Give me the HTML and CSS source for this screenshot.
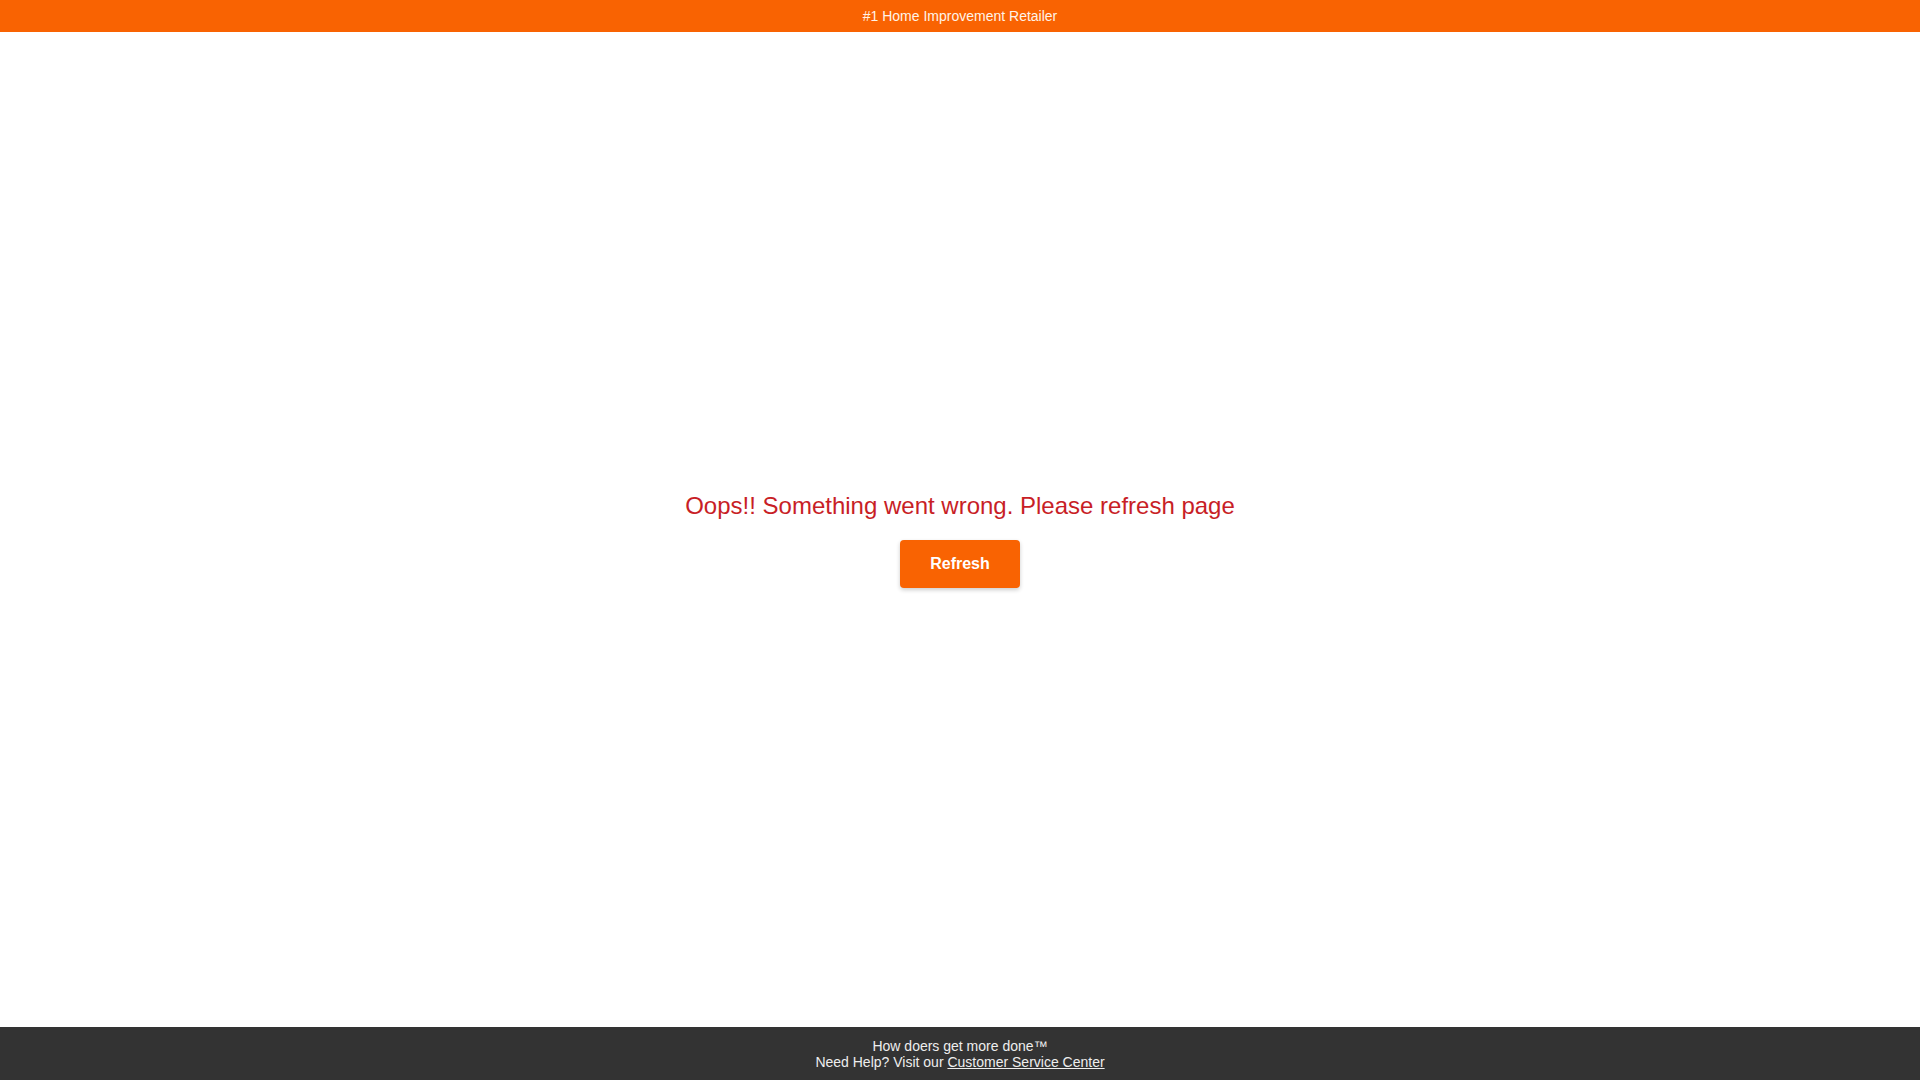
FILE: index.html
```html
<!DOCTYPE html>
<html lang="en">
<head>
<meta charset="utf-8">
<title>The Home Depot</title>
<link rel="stylesheet" href="styles.css">
</head>
<body>
<div class="page">
  <header class="topbar">#1 Home Improvement Retailer</header>
  <main class="content">
    <div class="error-box">
      <p class="error-text">Oops!! Something went wrong. Please refresh page</p>
      <button class="refresh-btn" type="button">Refresh</button>
    </div>
  </main>
  <footer class="footer">
    <div class="footer-line">How doers get more done™</div>
    <div class="footer-line">Need Help? Visit our <a class="footer-link" href="#">Customer Service Center</a></div>
  </footer>
</div>
</body>
</html>
```
FILE: styles.css
```css
html, body {
  margin: 0;
  padding: 0;
  height: 100%;
}
body {
  font-family: "Liberation Sans", Arial, sans-serif;
  background: #fff;
}
.page {
  display: flex;
  flex-direction: column;
  min-height: 100vh;
}
.topbar {
  height: 32px;
  background: #f96302;
  color: #fff3e8;
  font-size: 14px;
  line-height: 32px;
  text-align: center;
}
.content {
  flex: 1;
  display: flex;
  align-items: center;
  justify-content: center;
  padding-top: 21px;
}
.error-box {
  display: flex;
  flex-direction: column;
  align-items: center;
}
.error-text {
  margin: 0;
  font-size: 24px;
  line-height: 28px;
  color: #c81e26;
}
.refresh-btn {
  margin-top: 20px;
  width: 120px;
  height: 48px;
  border: none;
  border-radius: 4px;
  background: #f96302;
  color: #fff;
  font-family: "Liberation Sans", Arial, sans-serif;
  font-size: 16px;
  font-weight: bold;
  box-shadow: 0 2px 4px rgba(0, 0, 0, 0.2);
  cursor: pointer;
}
.footer {
  height: 53px;
  box-sizing: border-box;
  padding: 11px 0 10px;
  background: #333;
  color: #eee;
  font-size: 14px;
  line-height: 16px;
  text-align: center;
}
.footer-link {
  color: #eee;
  text-decoration: underline;
}
```
